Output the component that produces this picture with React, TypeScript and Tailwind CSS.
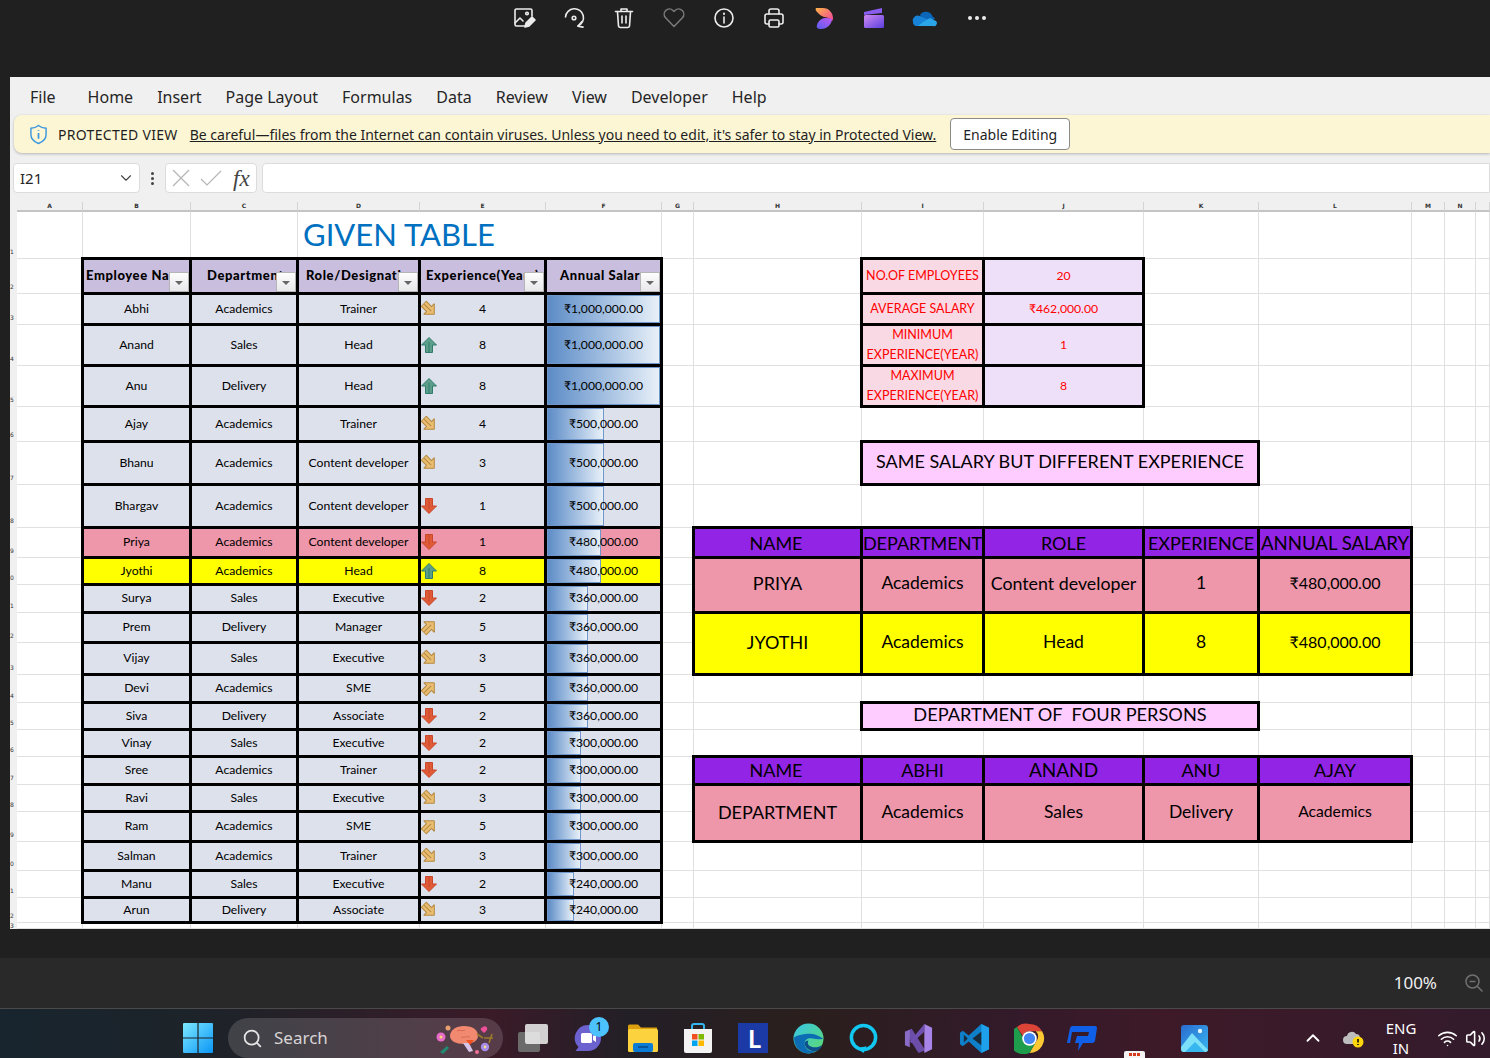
import { ChevronDown, ChevronUp, Search, Volume2, Wifi } from "lucide-react";
import type { ReactNode } from "react";

const colStart = ["col-start-1", "col-start-2", "col-start-3", "col-start-4", "col-start-5", "col-start-6", "col-start-7", "col-start-8", "col-start-9", "col-start-10", "col-start-11", "col-start-12", "col-start-13", "col-start-14", "col-start-15", "col-start-16"];
const rowStart = ["row-start-1", "row-start-2", "row-start-3", "row-start-4", "row-start-5", "row-start-6", "row-start-7", "row-start-8", "row-start-9", "row-start-10", "row-start-11", "row-start-12", "row-start-13", "row-start-14", "row-start-15", "row-start-16", "row-start-17", "row-start-18", "row-start-19", "row-start-20", "row-start-21", "row-start-22", "row-start-23", "row-start-24"];
const colSpan = ["", "col-span-1", "col-span-2", "col-span-3"];
const rowSpan = ["", "row-span-1", "row-span-2"];

const colNames = ["A", "B", "C", "D", "E", "F", "G", "H", "I", "J", "K", "L", "M", "N", ""];
const rowNums = Array.from({ length: 23 }, (_, i) => i + 1);

const employees = [
  ["Abhi", "Academics", "Trainer", 4, 1000000],
  ["Anand", "Sales", "Head", 8, 1000000],
  ["Anu", "Delivery", "Head", 8, 1000000],
  ["Ajay", "Academics", "Trainer", 4, 500000],
  ["Bhanu", "Academics", "Content developer", 3, 500000],
  ["Bhargav", "Academics", "Content developer", 1, 500000],
  ["Priya", "Academics", "Content developer", 1, 480000],
  ["Jyothi", "Academics", "Head", 8, 480000],
  ["Surya", "Sales", "Executive", 2, 360000],
  ["Prem", "Delivery", "Manager", 5, 360000],
  ["Vijay", "Sales", "Executive", 3, 360000],
  ["Devi", "Academics", "SME", 5, 360000],
  ["Siva", "Delivery", "Associate", 2, 360000],
  ["Vinay", "Sales", "Executive", 2, 300000],
  ["Sree", "Academics", "Trainer", 2, 300000],
  ["Ravi", "Sales", "Executive", 3, 300000],
  ["Ram", "Academics", "SME", 5, 300000],
  ["Salman", "Academics", "Trainer", 3, 300000],
  ["Manu", "Sales", "Executive", 2, 240000],
  ["Arun", "Delivery", "Associate", 3, 240000],
] as const;

const headers = [
  { label: "Employee Name", pad: "pl-[2px]" },
  { label: "Department", pad: "pl-[15px]" },
  { label: "Role/Designation", pad: "pl-[7px]" },
  { label: "Experience(Years)", pad: "pl-[5px]" },
  { label: "Annual Salary", pad: "pl-[13px]" },
];

const rupee = (n: number) => "₹" + n.toLocaleString("en-US") + ".00";

// one cell with a thick black box, neighbours overlap their borders
function Box({ c, r, cs = 1, rs = 1, className = "", children }: { c: number; r: number; cs?: number; rs?: number; className?: string; children?: ReactNode }) {
  return (
    <div className={`${colStart[c]} ${rowStart[r]} ${colSpan[cs]} ${rowSpan[rs]} z-10 flex min-h-0 min-w-0`}>
      <div className={`relative ml-[-2px] mr-[-1px] mt-[-2px] mb-[-1px] flex min-w-0 flex-1 items-center justify-center overflow-hidden whitespace-nowrap border-[3px] border-black ${className}`}>
        {children}
      </div>
    </div>
  );
}

function Arrow({ exp }: { exp: number }) {
  let fill = "#e8bd72";
  let stroke = "#b5893f";
  let turn = "rotate-135";
  if (exp >= 8) {
    fill = "#5d9e8a";
    stroke = "#2f7c6c";
    turn = "";
  } else if (exp === 5) {
    turn = "rotate-45";
  } else if (exp <= 2) {
    fill = "#df5a36";
    stroke = "#c9472a";
    turn = "rotate-180";
  }
  return (
    <svg viewBox="0 0 16 16" className={`h-[16px] w-[16px] ${turn}`}>
      <polygon points="8,0.5 15.5,8 11.5,8 11.5,15.5 4.5,15.5 4.5,8 0.5,8" fill={fill} stroke={stroke} strokeWidth="1" strokeLinejoin="round" />
      <line x1="8" y1="5" x2="8" y2="15" stroke={stroke} strokeWidth="1" />
    </svg>
  );
}

function FilterBtn() {
  return (
    <span className="absolute bottom-0 right-0 flex h-[20px] w-[20px] items-center justify-center border border-[#b5b5b5] bg-gradient-to-b from-[#fdfdfd] to-[#e8e8ec]">
      <span className="mt-[2px] h-0 w-0 border-x-[4px] border-t-[4px] border-x-transparent border-t-[#666]" />
    </span>
  );
}

function TopIcons() {
  const common = { fill: "none", stroke: "#ececec", strokeWidth: 1.6, strokeLinecap: "round" as const, strokeLinejoin: "round" as const };
  return (
    <div className="flex h-[36px] items-center pl-[499px]">
      <div className="flex w-[50px] justify-center">
        <svg viewBox="0 0 24 24" className="h-[24px] w-[24px]" {...common}>
          <path d="M13 20H4.5A1.5 1.5 0 0 1 3 18.5v-14A1.5 1.5 0 0 1 4.5 3h14A1.5 1.5 0 0 1 20 4.5V10" />
          <path d="M3 17l5-5 3 3" />
          <circle cx="15" cy="7.5" r="1.3" />
          <path d="M13 21l1-4 6-6 3 3-6 6z" fill="#ececec" />
        </svg>
      </div>
      <div className="flex w-[50px] justify-center">
        <svg viewBox="0 0 24 24" className="h-[24px] w-[24px]" {...common}>
          <path d="M3.5 11A9 9 0 1 1 16 20" />
          <path d="M20 15.5l-4 4.6 5 1" />
          <circle cx="12" cy="12" r="1.8" />
        </svg>
      </div>
      <div className="flex w-[50px] justify-center">
        <svg viewBox="0 0 24 24" className="h-[24px] w-[24px]" {...common}>
          <path d="M3.5 5.5h17M9 5V3h6v2" />
          <path d="M5.5 6l1 14a2 2 0 0 0 2 1.5h7a2 2 0 0 0 2-1.5l1-14" />
          <path d="M10 10v7M14 10v7" />
        </svg>
      </div>
      <div className="flex w-[50px] justify-center">
        <svg viewBox="0 0 24 24" className="h-[24px] w-[24px]" fill="none" stroke="#7a7a7a" strokeWidth="1.5" strokeLinejoin="round">
          <path d="M12 20.5L3.6 11.8a5.2 5.2 0 0 1 7.4-7.3l1 1 1-1a5.2 5.2 0 0 1 7.4 7.3z" />
        </svg>
      </div>
      <div className="flex w-[50px] justify-center">
        <svg viewBox="0 0 24 24" className="h-[24px] w-[24px]" {...common}>
          <circle cx="12" cy="12" r="9" />
          <path d="M12 11v6" />
          <path d="M12 7.5v.4" strokeWidth="2" />
        </svg>
      </div>
      <div className="flex w-[50px] justify-center">
        <svg viewBox="0 0 24 24" className="h-[24px] w-[24px]" {...common}>
          <path d="M7 8V5a2 2 0 0 1 2-2h6a2 2 0 0 1 2 2v3" />
          <path d="M7 18H5a2 2 0 0 1-2-2v-6a2 2 0 0 1 2-2h14a2 2 0 0 1 2 2v6a2 2 0 0 1-2 2h-2" />
          <rect x="7" y="14" width="10" height="7" rx="1.5" />
        </svg>
      </div>
      <div className="flex w-[50px] justify-center">
        <svg viewBox="0 0 24 24" className="h-[24px] w-[24px]">
          <defs>
            <linearGradient id="cp1" x1="0" y1="0" x2="1" y2="1"><stop offset="0" stopColor="#ffb347" /><stop offset="1" stopColor="#f0449a" /></linearGradient>
            <linearGradient id="cp2" x1="0" y1="1" x2="1" y2="0"><stop offset="0" stopColor="#5a5cf0" /><stop offset="1" stopColor="#c05cf0" /></linearGradient>
          </defs>
          <path d="M4 2h7c6 0 10 5 10 10 0 1 0 2-1 3-2-3-5-4-8-4-3-1-5-3-7-5C4 5 3 3 4 2z" fill="url(#cp1)" />
          <path d="M20 13c0 5-5 10-11 10-3 0-5-1-4-4 1-4 5-7 8-7 3 0 5 0 7 1z" fill="url(#cp2)" />
        </svg>
      </div>
      <div className="flex w-[50px] justify-center">
        <svg viewBox="0 0 24 24" className="h-[24px] w-[24px]">
          <defs>
            <linearGradient id="cc1" x1="0" y1="0" x2="1" y2="1"><stop offset="0" stopColor="#d08af0" /><stop offset="1" stopColor="#5b3fe0" /></linearGradient>
          </defs>
          <path d="M2 6l18-4v5L2 9z" fill="#8b5cf0" />
          <rect x="2" y="9" width="20" height="13" rx="1.5" fill="url(#cc1)" />
        </svg>
      </div>
      <div className="flex w-[50px] justify-center">
        <svg viewBox="0 0 26 24" className="h-[24px] w-[26px]">
          <path d="M9 9a7 7 0 0 1 12.5 1.5A5 5 0 0 1 24 13L14 16z" fill="#0b65b8" />
          <path d="M2 16a5 5 0 0 1 7-6l9 4-7 6H5a4 4 0 0 1-3-4z" fill="#1683d8" />
          <path d="M7 20h15a3 3 0 0 0 3-5l-6-3-7 4z" fill="#2aa5e8" />
        </svg>
      </div>
      <div className="ml-[3px] flex w-[50px] justify-center gap-[3px]">
        <span className="h-[4px] w-[4px] rounded-full bg-[#ececec]" />
        <span className="h-[4px] w-[4px] rounded-full bg-[#ececec]" />
        <span className="h-[4px] w-[4px] rounded-full bg-[#ececec]" />
      </div>
    </div>
  );
}

function Sheet() {
  const cells = [];
  for (const r of rowNums) {
    for (let c = 1; c <= 15; c++) {
      cells.push(<div key={`${r}-${c}`} className={`${colStart[c]} ${rowStart[r]} border-b border-r border-[#e0e0e0] bg-white`} />);
    }
  }
  return (
    <div className="grid grid-cols-[7px_66px_108px_107px_122px_126px_116px_32px_168px_122px_160px_115px_153px_33px_31px_14px] grid-rows-[10px_47px_35px_31px_41px_41px_35px_43px_43px_30px_27px_28px_30px_32px_28px_27px_27px_28px_27px_30px_29px_27px_25px_6px] [font-family:Lato,'Noto_Sans',sans-serif] text-black">
      {colNames.map((n, i) => (
        <div key={i} className={`${colStart[i + 1]} row-start-1 border-b-2 border-r border-b-[#c4c4c4] border-r-[#d4d4d4] text-center text-[6px] font-bold leading-[8px] text-[#333] [font-family:'DejaVu_Sans',sans-serif]`}>
          {n}
        </div>
      ))}
      {rowNums.map((r) => (
        <div key={r} className={`col-start-1 ${rowStart[r]} flex items-end text-[6px] text-[#333] [font-family:'DejaVu_Sans',sans-serif] ${r === 23 ? "leading-[6px]" : "leading-[14px]"}`}>
          {r % 10}
        </div>
      ))}
      {cells}

      <div className="z-10 col-span-2 col-start-5 row-start-2 flex items-center bg-white pb-[3px] pl-[5px] text-[31px] leading-none text-[#0070c0]">
        <span className="whitespace-nowrap">GIVEN TABLE</span>
      </div>

      {headers.map((h, i) => (
        <Box key={h.label} c={i + 2} r={2} className={`justify-start bg-[#c9bedd] text-[13px] font-black tracking-[0.6px] ${h.pad}`}>
          <span>{h.label}</span>
          <FilterBtn />
        </Box>
      ))}

      {employees.map((e, i) => {
        const r = i + 3;
        const bg = e[0] === "Priya" ? "bg-[#ee96aa]" : e[0] === "Jyothi" ? "bg-[#ffff00]" : "bg-[#dde1ec]";
        const text = `${bg} text-[12.2px]`;
        return [
          <Box key={`${e[0]}-n`} c={2} r={r} className={text}>{e[0]}</Box>,
          <Box key={`${e[0]}-d`} c={3} r={r} className={text}>{e[1]}</Box>,
          <Box key={`${e[0]}-r`} c={4} r={r} className={text}>{e[2]}</Box>,
          <Box key={`${e[0]}-e`} c={5} r={r} className={`${text} justify-start`}>
            <span className="grid w-full grid-cols-[16px_1fr_16px] items-center">
              <Arrow exp={e[3]} />
              <span className="text-center">{e[3]}</span>
            </span>
          </Box>,
          <Box key={`${e[0]}-s`} c={6} r={r} className={text}>
            <span
              className="absolute bottom-0 left-0 top-0 border border-[#6f97cc] bg-gradient-to-r from-[#5c8cc6] to-[#e8f0f8]"
              style={{ width: `${(e[4] / 1000000) * 113}px` }}
            />
            <span className="relative">{rupee(e[4])}</span>
          </Box>,
        ];
      })}

      <Box c={9} r={2} className="bg-[#f9d9e4] text-[12.5px] text-[#ff0000]">NO.OF EMPLOYEES</Box>
      <Box c={10} r={2} className="bg-[#efe0f9] text-[12.2px] text-[#ff0000]">20</Box>
      <Box c={9} r={3} className="bg-[#f9d9e4] text-[12.5px] text-[#ff0000]">AVERAGE SALARY</Box>
      <Box c={10} r={3} className="bg-[#efe0f9] text-[12.2px] text-[#ff0000]">₹462,000.00</Box>
      <Box c={9} r={4} className="bg-[#f9d9e4] text-center text-[12.5px] leading-[20px] text-[#ff0000]">MINIMUM<br />EXPERIENCE(YEAR)</Box>
      <Box c={10} r={4} className="bg-[#efe0f9] text-[12.2px] text-[#ff0000]">1</Box>
      <Box c={9} r={5} className="bg-[#f9d9e4] text-center text-[12.5px] leading-[20px] text-[#ff0000]">MAXIMUM<br />EXPERIENCE(YEAR)</Box>
      <Box c={10} r={5} className="bg-[#efe0f9] text-[12.2px] text-[#ff0000]">8</Box>

      <Box c={9} r={7} cs={3} className="bg-[#ffccff] pb-[4px] text-[18px]">SAME SALARY BUT DIFFERENT EXPERIENCE</Box>

      <Box c={8} r={9} className="bg-[#9224e6] pr-[3px] pt-[1px] text-[18px]">NAME</Box>
      <Box c={9} r={9} className="bg-[#9224e6] pt-[1px] text-[18px]">DEPARTMENT</Box>
      <Box c={10} r={9} className="bg-[#9224e6] pt-[1px] text-[18px]">ROLE</Box>
      <Box c={11} r={9} className="bg-[#9224e6] pt-[1px] text-[18px]">EXPERIENCE</Box>
      <Box c={12} r={9} className="bg-[#9224e6] pt-[2px] text-[18.6px]">ANNUAL SALARY</Box>

      <Box c={8} r={10} rs={2} className="bg-[#ee96aa] pb-[4px] text-[18px]">PRIYA</Box>
      <Box c={9} r={10} rs={2} className="bg-[#ee96aa] pb-[3px] text-[17.5px]">Academics</Box>
      <Box c={10} r={10} rs={2} className="bg-[#ee96aa] pb-[4px] text-[17.8px]">Content developer</Box>
      <Box c={11} r={10} rs={2} className="bg-[#ee96aa] pb-[3px] text-[17.5px]">1</Box>
      <Box c={12} r={10} rs={2} className="bg-[#ee96aa] pb-[4px] text-[16px]">₹480,000.00</Box>

      <Box c={8} r={12} rs={2} className="bg-[#ffff00] pb-[3px] text-[18px]">JYOTHI</Box>
      <Box c={9} r={12} rs={2} className="bg-[#ffff00] pb-[2px] text-[17.5px]">Academics</Box>
      <Box c={10} r={12} rs={2} className="bg-[#ffff00] pb-[2px] text-[17.5px]">Head</Box>
      <Box c={11} r={12} rs={2} className="bg-[#ffff00] pb-[2px] text-[17.5px]">8</Box>
      <Box c={12} r={12} rs={2} className="bg-[#ffff00] pb-[3px] text-[16px]">₹480,000.00</Box>

      <Box c={9} r={15} cs={3} className="bg-[#ffccff] pb-[2px] text-[18.2px]"><span className="whitespace-pre">DEPARTMENT OF  FOUR PERSONS</span></Box>

      <Box c={8} r={17} className="bg-[#9224e6] pr-[3px] text-[18px]">NAME</Box>
      <Box c={9} r={17} className="bg-[#9224e6] text-[18px]">ABHI</Box>
      <Box c={10} r={17} className="bg-[#9224e6] text-[19px]">ANAND</Box>
      <Box c={11} r={17} className="bg-[#9224e6] text-[18px]">ANU</Box>
      <Box c={12} r={17} className="bg-[#9224e6] text-[18px]">AJAY</Box>

      <Box c={8} r={18} rs={2} className="bg-[#ee96aa] pb-[2px] text-[18px]">DEPARTMENT</Box>
      <Box c={9} r={18} rs={2} className="bg-[#ee96aa] pb-[1px] text-[17.5px]">Academics</Box>
      <Box c={10} r={18} rs={2} className="bg-[#ee96aa] pb-[1px] text-[17.5px]">Sales</Box>
      <Box c={11} r={18} rs={2} className="bg-[#ee96aa] pb-[1px] text-[17.5px]">Delivery</Box>
      <Box c={12} r={18} rs={2} className="bg-[#ee96aa] pb-[3px] text-[15.7px]">Academics</Box>
    </div>
  );
}

function TaskbarIcons() {
  return (
    <>
      <div className="ml-[15px] flex w-[60px] justify-center">
        <svg viewBox="0 0 30 30" className="h-[30px] w-[30px]">
          <defs>
            <linearGradient id="win" x1="0" y1="0" x2="1" y2="1"><stop offset="0" stopColor="#7ce8ff" /><stop offset="1" stopColor="#0b96f5" /></linearGradient>
          </defs>
          <path d="M0 1a1 1 0 0 1 1-1h13.4v14.4H0zM15.6 0H29a1 1 0 0 1 1 1v13.4H15.6zM0 15.6h14.4V30H1a1 1 0 0 1-1-1zM15.6 15.6H30V29a1 1 0 0 1-1 1H15.6z" fill="url(#win)" />
        </svg>
      </div>
      <div className="flex h-[40px] w-[275px] items-center rounded-[20px] bg-white/15 pl-[14px]">
        <Search className="h-[21px] w-[21px] text-[#e4e4e4]" strokeWidth={2} />
        <span className="ml-[11px] text-[17px] text-[#d8d4d6]">Search</span>
        <svg viewBox="0 0 62 34" className="ml-[105px] h-[34px] w-[62px]">
          <circle cx="8" cy="16" r="4.5" fill="#e86ac8" />
          <circle cx="8" cy="16" r="1.5" fill="#f5d76e" />
          <circle cx="15" cy="7" r="2.5" fill="#e8a070" />
          <path d="M17 15c0-6 6-10 14-10 9 0 14 4 14 10 0 5-6 8-14 8-8 0-14-3-14-8z" fill="#f0896f" />
          <path d="M24 10c3-2 5 1 8-1M28 16c3 1 6-1 9 0" fill="none" stroke="#d96a55" strokeWidth="1" />
          <path d="M30 22l6 0 4 8-4 1z" fill="#d5c4e8" />
          <path d="M33 19l8 0-4 5z" fill="#f05020" />
          <path d="M7 31l7-6 2 2-6 6z" fill="#1f8a70" />
          <circle cx="52" cy="26" r="4.2" fill="#a78be8" />
          <circle cx="52" cy="26" r="1.4" fill="#f5e08a" />
          <path d="M50 6c2-2 5 0 4 3l-3 3-3-3c-1-1 0-2 2-3z" fill="#f0509a" />
          <path d="M44 13l6 4M59 13l-3 9M51 17l9 0" stroke="#9a7a2a" strokeWidth="1.6" />
          <circle cx="44" cy="31" r="2" fill="#f07098" />
        </svg>
      </div>
      <div className="flex w-[60px] justify-center">
        <svg viewBox="0 0 32 30" className="h-[30px] w-[32px]">
          <rect x="1" y="9" width="22" height="20" rx="2" fill="#6b6b6b" />
          <rect x="8" y="1" width="23" height="20" rx="2" fill="#f0f0f0" fillOpacity="0.85" />
        </svg>
      </div>
      <div className="relative flex w-[50px] justify-center">
        <svg viewBox="0 0 30 32" className="h-[32px] w-[30px]">
          <path d="M15 3a13 13 0 0 1 0 26H2.5l3-4A13 13 0 0 1 15 3z" fill="#6b61cf" />
          <rect x="8" y="11" width="11" height="10" rx="1.5" fill="#fff" />
          <path d="M20 14l3-2v8l-3-2z" fill="#fff" />
        </svg>
        <span className="absolute right-[4px] top-[-5px] flex h-[20px] w-[20px] items-center justify-center rounded-full bg-[#4cc2ff] text-[12px] text-black">1</span>
      </div>
      <div className="flex w-[60px] justify-center">
        <svg viewBox="0 0 32 30" className="h-[30px] w-[32px]">
          <path d="M1 3a1.5 1.5 0 0 1 1.5-1.5H11l3 3h16v6H1z" fill="#dca00f" />
          <rect x="1" y="6" width="30" height="23" rx="1.5" fill="#fdd23f" />
          <rect x="6" y="20" width="20" height="9" rx="2" fill="#0a7cd6" />
          <path d="M11 24h10" stroke="#053d75" strokeWidth="1.2" />
        </svg>
      </div>
      <div className="ml-[-2px] flex w-[54px] justify-center">
        <svg viewBox="0 0 30 32" className="h-[32px] w-[30px]">
          <path d="M9 8V4a2 2 0 0 1 2-2h8a2 2 0 0 1 2 2v4" fill="none" stroke="#35b5f0" strokeWidth="2" />
          <path d="M1 7h28v22a2 2 0 0 1-2 2H3a2 2 0 0 1-2-2z" fill="#f3f3f3" />
          <rect x="9" y="12" width="5.5" height="5.5" fill="#f25022" />
          <rect x="15.5" y="12" width="5.5" height="5.5" fill="#7fba00" />
          <rect x="9" y="18.5" width="5.5" height="5.5" fill="#00a4ef" />
          <rect x="15.5" y="18.5" width="5.5" height="5.5" fill="#ffb900" />
        </svg>
      </div>
      <div className="flex w-[56px] justify-center">
        <div className="flex h-[30px] w-[30px] items-center justify-center bg-[#1c3aa6] pl-[3px] text-[25px] font-bold leading-none text-white [font-family:Lato,sans-serif]">L</div>
      </div>
      <div className="flex w-[55px] justify-center">
        <svg viewBox="0 0 32 32" className="h-[31px] w-[31px]">
          <defs>
            <linearGradient id="edg" x1="0" y1="0" x2="1" y2="1"><stop offset="0" stopColor="#36c4e8" /><stop offset="1" stopColor="#5fdc6a" /></linearGradient>
          </defs>
          <circle cx="16" cy="16" r="15.5" fill="url(#edg)" />
          <path d="M1 15C1 26 9 31.5 16 31.5c3 0 6-1 8-2.5-5 1-12-1-12-8 0-4 4-6 8-5 5 1 11 1 11 0-3-2-8-5-13-5C10 11 3 13 1 15z" fill="#0c6cb4" />
          <path d="M12 21c0 5 6 9 12 8 3-1 5-3 6-6-3 2-9 3-12 1-3-1-3-4-2-6-2 0-4 1-4 3z" fill="#0f4f8c" />
        </svg>
      </div>
      <div className="flex w-[55px] justify-center">
        <svg viewBox="0 0 32 32" className="h-[31px] w-[31px]">
          <circle cx="16" cy="15" r="12.5" fill="none" stroke="#12c7f0" strokeWidth="3.6" />
          <path d="M9 26l7 5 3-7z" fill="#12c7f0" />
        </svg>
      </div>
      <div className="flex w-[55px] justify-center">
        <svg viewBox="0 0 32 32" className="h-[31px] w-[31px]">
          <path d="M2 9l7-3 14 22-7 3z" fill="#6b4ea8" />
          <path d="M2 9l5-2v18l-5-2z" fill="#8a6cc8" />
          <path d="M22 1l8 4v22l-8 4z" fill="#a884e8" />
          <path d="M22 1v8l-13 12-2-2z" fill="#6f50b0" />
        </svg>
      </div>
      <div className="flex w-[56px] justify-center">
        <svg viewBox="0 0 32 32" className="h-[31px] w-[31px]">
          <path d="M23 1l8 4v22l-8 4-13-12-6 5-3-2V10l3-2 6 5z" fill="#0e7fc8" />
          <path d="M23 1l8 4v22l-8 4z" fill="#1ea0ea" />
          <path d="M23 9v14l-9-7z" fill="#1b1b22" fillOpacity="0.85" />
          <path d="M5 12v8l4-4z" fill="#1b1b22" fillOpacity="0.85" />
        </svg>
      </div>
      <div className="flex w-[54px] justify-center">
        <svg viewBox="0 0 32 32" className="h-[31px] w-[31px]">
          <path d="M16 1a15 15 0 0 1 13 7.5H16a7.5 7.5 0 0 0-7 5L3 4A15 15 0 0 1 16 1z" fill="#db4437" />
          <path d="M29 8.5A15 15 0 0 1 16 31l6.5-11.5a7.5 7.5 0 0 0 0-11z" fill="#fcc934" />
          <path d="M16 31A15 15 0 0 1 3 4l6.5 11.5a7.5 7.5 0 0 0 13 4z" fill="#1e9d4c" />
          <circle cx="16" cy="16" r="7.5" fill="#fff" />
          <circle cx="16" cy="16" r="5.8" fill="#4285f4" />
        </svg>
      </div>
      <div className="flex w-[54px] justify-center">
        <svg viewBox="0 0 32 28" className="h-[28px] w-[32px]">
          <path d="M6 2h22a2 2 0 0 1 2 2l-2 13a3 3 0 0 1-3 2h-9l-5 8 1-8H8l2-7h11l1-4H5l-2 11H0L3 4a3 3 0 0 1 3-2z" fill="#0f5fe8" />
        </svg>
      </div>
      <div className="ml-[57px] flex w-[54px] justify-center">
        <svg viewBox="0 0 27 27" className="h-[27px] w-[27px]">
          <defs>
            <linearGradient id="pho" x1="0" y1="0" x2="1" y2="1"><stop offset="0" stopColor="#2a6cd0" /><stop offset="1" stopColor="#38b6f0" /></linearGradient>
          </defs>
          <rect x="0" y="0" width="27" height="27" rx="3" fill="url(#pho)" />
          <circle cx="19" cy="6" r="2.2" fill="#e0f4ff" />
          <path d="M0 22L11 8l16 17v-1a3 3 0 0 1-3 3H3a3 3 0 0 1-3-3z" fill="#7be0f8" />
          <path d="M4 27l10-10 10 10z" fill="#38b6f0" />
        </svg>
      </div>
    </>
  );
}

export default function App() {
  return (
    <div className="flex h-[1058px] w-[1490px] flex-col overflow-hidden bg-[#202020] [font-family:'Noto_Sans',sans-serif]">
      <div className="h-[77px] shrink-0">
        <TopIcons />
      </div>

      <div className="ml-[10px] flex h-[852px] shrink-0 flex-col overflow-hidden bg-[#f0f0f0]">
        <div className="flex h-[38px] shrink-0 items-center pl-[20px] pt-[1px] text-[16px] text-[#262626]">
          <span className="mr-[32px]">File</span>
          <div className="flex gap-[24px]">
            <span>Home</span>
            <span>Insert</span>
            <span>Page Layout</span>
            <span>Formulas</span>
            <span>Data</span>
            <span>Review</span>
            <span>View</span>
            <span>Developer</span>
            <span>Help</span>
          </div>
        </div>

        <div className="ml-[4px] flex h-[38px] shrink-0 items-center rounded-l-[8px] bg-[#fdf6d4] pl-[15px] text-[#1f1f1f] shadow-[0_1px_3px_rgba(0,0,0,0.25)]">
          <svg viewBox="0 0 20 22" className="h-[21px] w-[19px]" fill="none" stroke="#3a96dd" strokeWidth="1.5">
            <path d="M10 1.5c2.5 2 5 2.8 8 3V11c0 4.500-3.500 7.800-8 9.500-4.500-1.700-8-5-8-9.500V4.500c3-.2 5.500-1 8-3z" />
            <path d="M10 9.5v6M10 6.300v.8" stroke="#3a96dd" strokeWidth="1.8" />
          </svg>
          <span className="ml-[10px] whitespace-nowrap text-[14px] tracking-[0.3px]">PROTECTED VIEW</span>
          <span className="ml-[12px] whitespace-nowrap text-[14px] underline">Be careful—files from the Internet can contain viruses. Unless you need to edit, it's safer to stay in Protected View.</span>
          <span className="ml-[14px] flex h-[32px] w-[120px] items-center justify-center rounded-[4px] border border-[#8a8a8a] bg-white text-[14px]">Enable Editing</span>
        </div>

        <div className="mt-[10px] flex h-[30px] shrink-0 items-stretch pl-[3px]">
          <div className="flex w-[127px] items-center justify-between rounded-[4px] border border-[#dcdcdc] bg-white pl-[6px] pr-[4px] text-[15px] text-[#262626]">
            I21
            <ChevronDown className="h-[18px] w-[18px] text-[#444]" strokeWidth={1.5} />
          </div>
          <div className="flex w-[25px] flex-col items-center justify-center gap-[2px]">
            <span className="h-[3px] w-[3px] rounded-full bg-[#444]" />
            <span className="h-[3px] w-[3px] rounded-full bg-[#444]" />
            <span className="h-[3px] w-[3px] rounded-full bg-[#444]" />
          </div>
          <div className="flex w-[92px] items-center rounded-[4px] border border-[#dcdcdc] bg-white pl-[6px]">
            <svg viewBox="0 0 18 18" className="h-[18px] w-[18px]" fill="none" stroke="#b5b5b5" strokeWidth="1.2">
              <path d="M1 1l16 16M17 1L1 17" />
            </svg>
            <svg viewBox="0 0 22 16" className="ml-[10px] h-[16px] w-[22px]" fill="none" stroke="#b5b5b5" strokeWidth="1.2">
              <path d="M1 9l6 6L21 1" />
            </svg>
            <span className="ml-[11px] text-[23px] italic leading-none text-[#444] [font-family:'Liberation_Serif',serif]">fx</span>
          </div>
          <div className="ml-[5px] flex-1 rounded-l-[4px] border border-[#dcdcdc] bg-white" />
        </div>

        <div className="mt-[9px]">
          <Sheet />
        </div>
      </div>

      <div className="h-[29px] shrink-0" />

      <div className="flex h-[50px] shrink-0 items-center justify-end bg-[#292929] pr-[6px] text-[#f0f0f0]">
        <span className="text-[17px]">100%</span>
        <svg viewBox="0 0 20 20" className="ml-[27px] h-[20px] w-[20px]" fill="none" stroke="#707070" strokeWidth="1.5">
          <circle cx="8.5" cy="8.5" r="6.5" />
          <path d="M5.5 8.5h6M13.5 13.5l5 5" />
        </svg>
      </div>

      <div className="relative flex h-[50px] shrink-0 items-center overflow-hidden border-t border-[#4a4a4a] bg-[linear-gradient(90deg,#18252e_0%,#1d2329_14%,#3a1b28_33%,#231f27_42%,#2a1f1d_54%,#331a2a_68%,#3e1a28_78%,#331b2c_100%)] pl-[153px] pt-[9px] text-white">
        <TaskbarIcons />
        <div className="ml-[72px] flex w-[40px] justify-center">
          <ChevronUp className="h-[22px] w-[22px]" strokeWidth={2} />
        </div>
        <div className="relative flex w-[40px] justify-center">
          <svg viewBox="0 0 22 20" className="h-[20px] w-[22px]">
            <path d="M5 16a4 4 0 0 1 0-8 5 5 0 0 1 9-2 4 4 0 0 1 4 4H12v6z" fill="#bdbdbd" />
            <circle cx="16" cy="14" r="5.5" fill="#ffd60a" />
            <path d="M16 11v3.5M16 16v1" stroke="#000" strokeWidth="1.5" />
          </svg>
        </div>
        <div className="ml-[8px] flex w-[40px] flex-col items-center text-[15px] leading-[20px]">
          <span>ENG</span>
          <span>IN</span>
        </div>
        <Wifi className="ml-[16px] h-[21px] w-[21px]" strokeWidth={1.8} />
        <Volume2 className="ml-[7px] h-[21px] w-[21px]" strokeWidth={1.8} />
        <span className="absolute bottom-0 left-[1124px] flex h-[7px] w-[21px] items-start justify-center gap-[1px] rounded-t-[2px] bg-[#f3f3f3] pt-[2px]">
          <span className="h-[3px] w-[3px] bg-[#d83b1c]" />
          <span className="h-[3px] w-[3px] bg-[#d83b1c]" />
          <span className="h-[3px] w-[3px] bg-[#d83b1c]" />
        </span>
      </div>
    </div>
  );
}
